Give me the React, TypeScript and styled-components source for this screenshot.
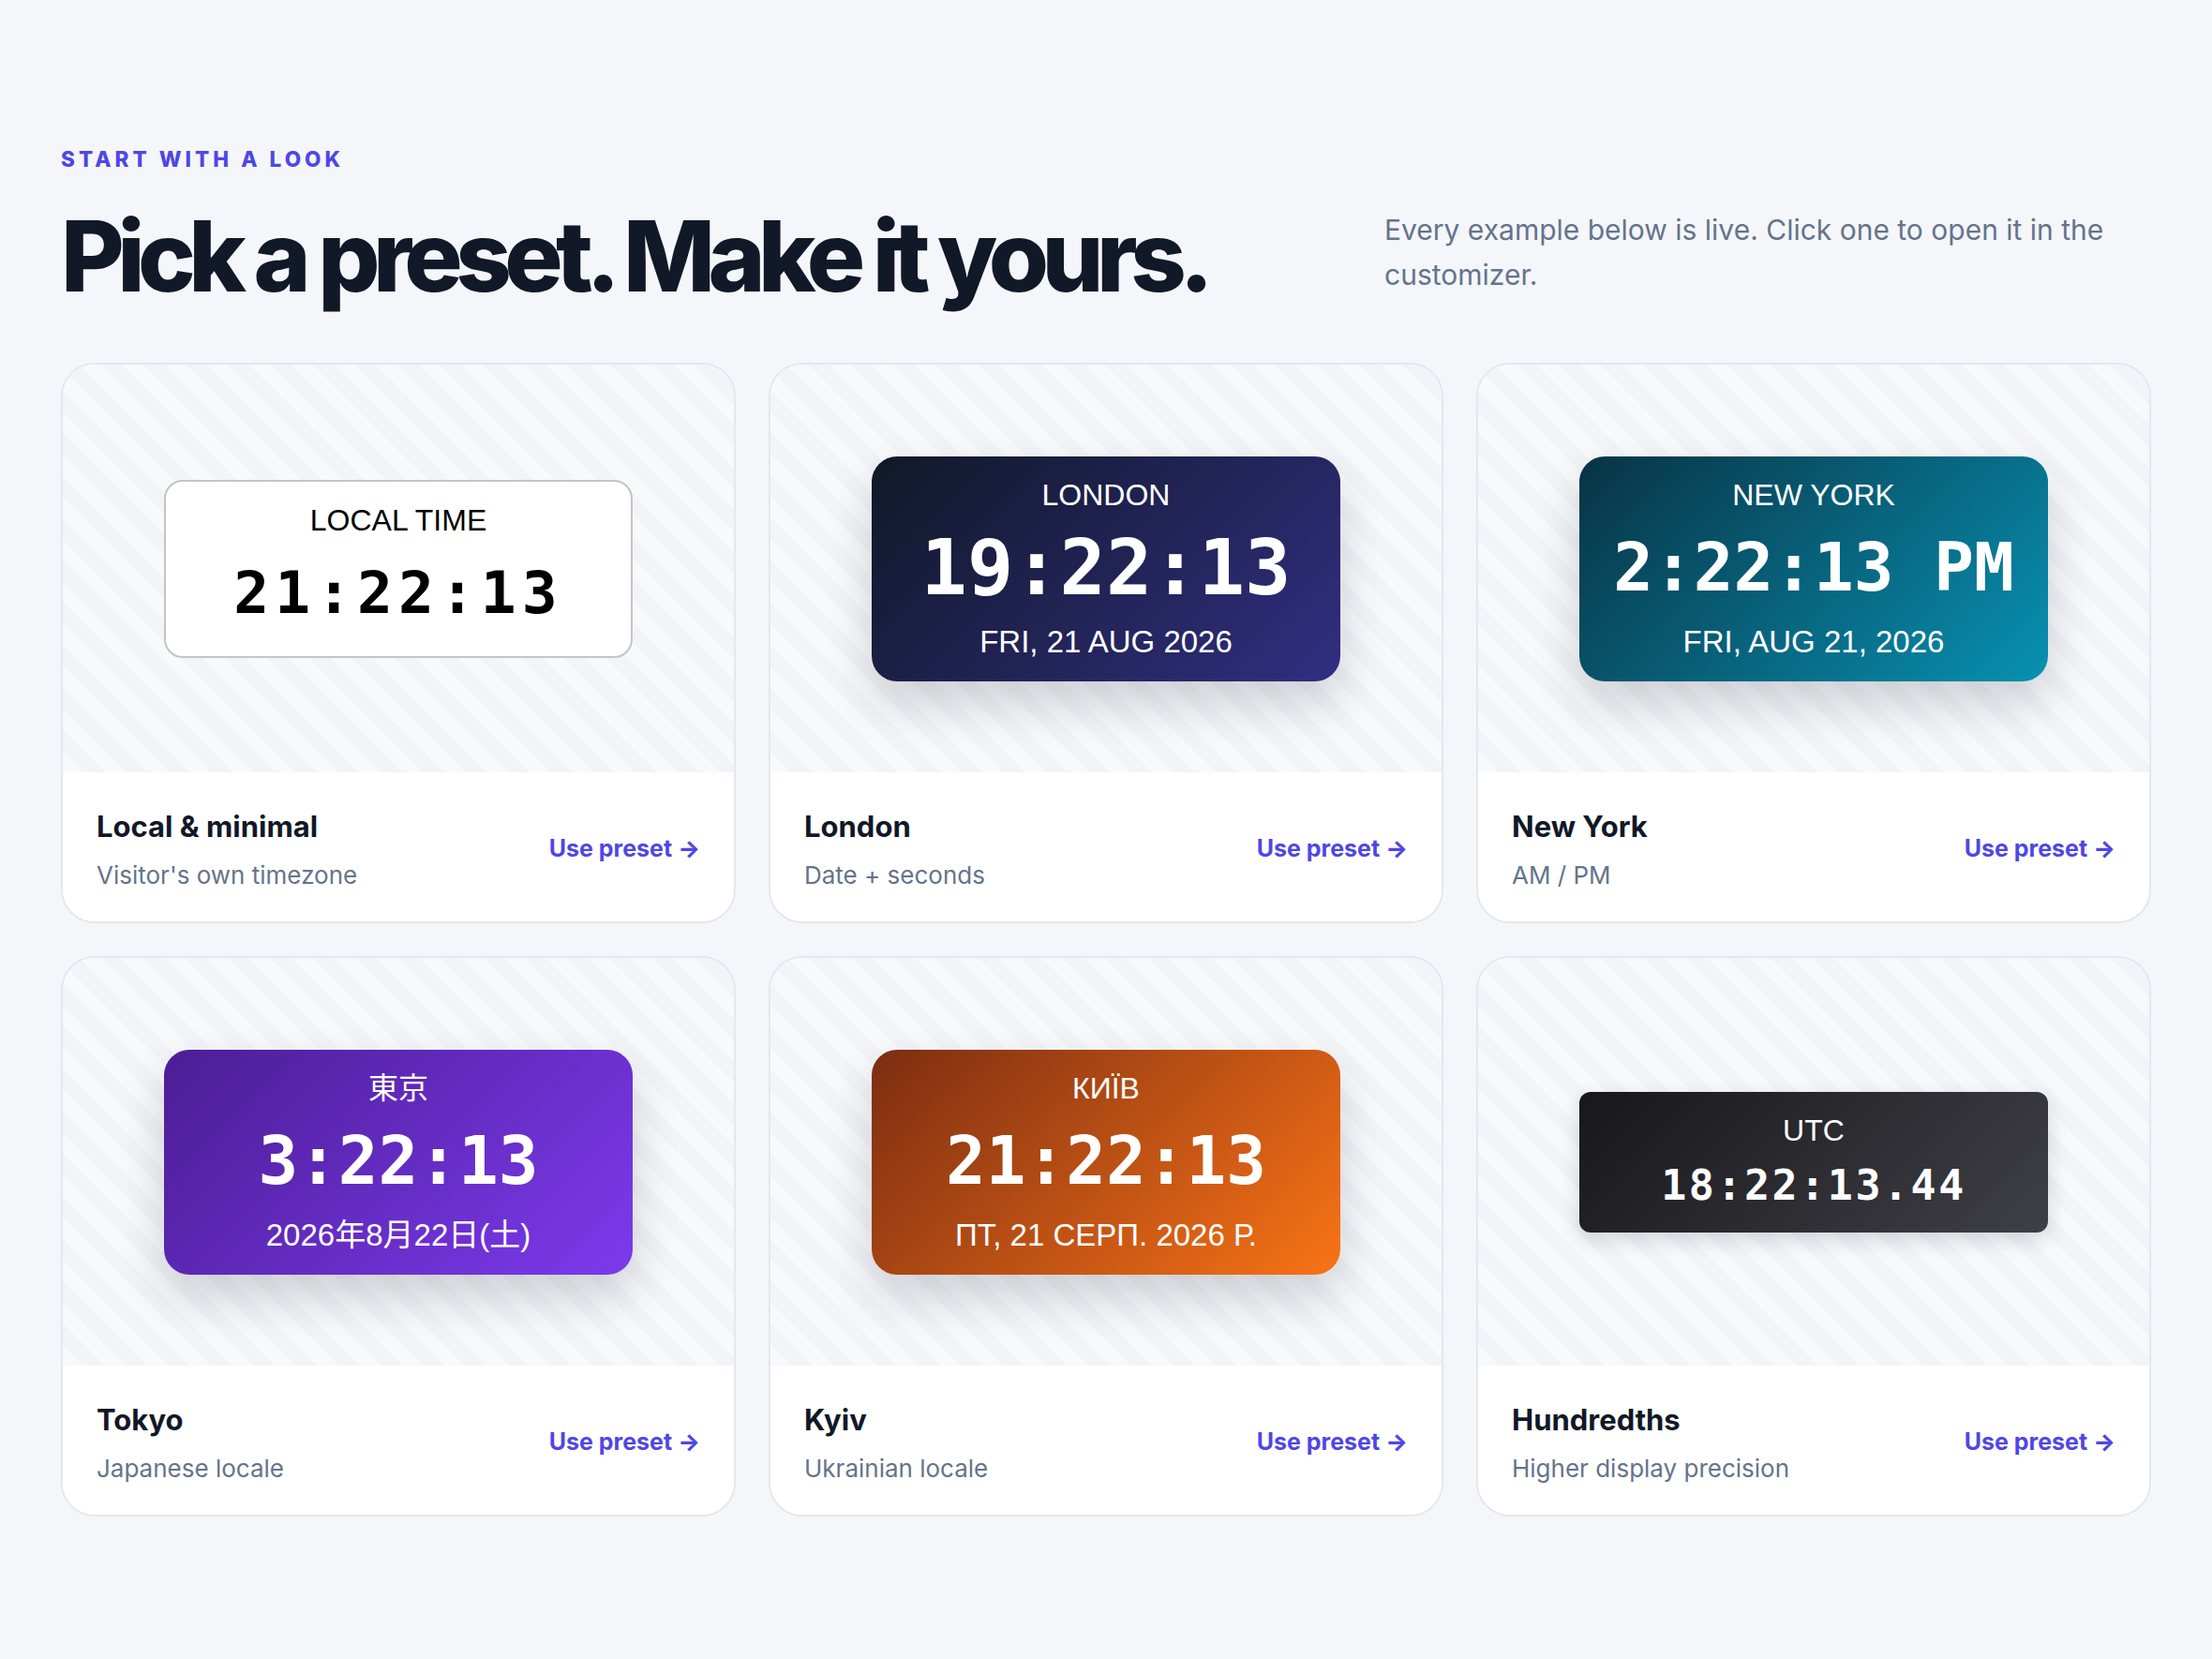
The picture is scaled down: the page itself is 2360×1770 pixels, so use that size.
import React from 'react';
import styled, { createGlobalStyle, css } from 'styled-components';

const GlobalStyle = createGlobalStyle`
  * { box-sizing: border-box; }
  html, body {
    margin: 0;
    padding: 0;
    background: #f5f6fa;
  }
  body {
    font-family: Inter, "Noto Sans", sans-serif;
    -webkit-font-smoothing: antialiased;
  }
`;

type Variant = 'light' | 'navy' | 'teal' | 'violet' | 'orange' | 'zinc';

type Preset = {
  variant: Variant;
  label: string;
  time: string;
  timeSize: number;
  date?: string;
  title: string;
  description: string;
};

const presets: Preset[] = [
  {
    variant: 'light',
    label: 'LOCAL TIME',
    time: '21:22:13',
    timeSize: 63,
    title: 'Local & minimal',
    description: "Visitor's own timezone",
  },
  {
    variant: 'navy',
    label: 'LONDON',
    time: '19:22:13',
    timeSize: 82,
    date: 'FRI, 21 AUG 2026',
    title: 'London',
    description: 'Date + seconds',
  },
  {
    variant: 'teal',
    label: 'NEW YORK',
    time: '2:22:13 PM',
    timeSize: 71,
    date: 'FRI, AUG 21, 2026',
    title: 'New York',
    description: 'AM / PM',
  },
  {
    variant: 'violet',
    label: '東京',
    time: '3:22:13',
    timeSize: 71,
    date: '2026年8月22日(土)',
    title: 'Tokyo',
    description: 'Japanese locale',
  },
  {
    variant: 'orange',
    label: 'КИЇВ',
    time: '21:22:13',
    timeSize: 71,
    date: 'ПТ, 21 СЕРП. 2026 Р.',
    title: 'Kyiv',
    description: 'Ukrainian locale',
  },
  {
    variant: 'zinc',
    label: 'UTC',
    time: '18:22:13.44',
    timeSize: 45,
    title: 'Hundredths',
    description: 'Higher display precision',
  },
];

const backgrounds: Record<Variant, string> = {
  light: '#ffffff',
  navy: 'linear-gradient(135deg, #111827 0%, #312e81 100%)',
  teal: 'linear-gradient(135deg, #083344 0%, #0891b2 100%)',
  violet: 'linear-gradient(135deg, #4c1d95 0%, #7c3aed 100%)',
  orange: 'linear-gradient(135deg, #7c2d12 0%, #f97316 100%)',
  zinc: 'linear-gradient(135deg, #18181b 0%, #3f3f46 100%)',
};

export default function App() {
  return (
    <>
      <GlobalStyle />
      <Page>
        <Header>
          <HeadingBlock>
            <Eyebrow>Start with a look</Eyebrow>
            <Heading>Pick a preset. Make it yours.</Heading>
          </HeadingBlock>
          <Lead>
            Every example below is live. Click one to open it in the
            customizer.
          </Lead>
        </Header>

        <Grid>
          {presets.map((p) => (
            <Card key={p.title}>
              <Preview>
                <Clock $variant={p.variant}>
                  <ClockLabel>{p.label}</ClockLabel>
                  <ClockTime $size={p.timeSize} $compact={p.variant === 'zinc'} $spaced={p.variant === 'light'}>
                    {p.time}
                  </ClockTime>
                  {p.date && <ClockDate>{p.date}</ClockDate>}
                </Clock>
              </Preview>
              <Footer>
                <FooterText>
                  <CardTitle>{p.title}</CardTitle>
                  <CardDescription>{p.description}</CardDescription>
                </FooterText>
                <UseButton type="button">
                  Use preset <Arrow>→</Arrow>
                </UseButton>
              </Footer>
            </Card>
          ))}
        </Grid>
      </Page>
    </>
  );
}

const Page = styled.main`
  width: 2230px;
  margin: 0 auto;
  padding: 155px 0 120px;
`;

const Header = styled.header`
  display: flex;
  justify-content: space-between;
  align-items: flex-end;
`;

const HeadingBlock = styled.div`
  display: flex;
  flex-direction: column;
  gap: 36px;
`;

const Eyebrow = styled.p`
  margin: 0;
  font-size: 22.5px;
  line-height: 30px;
  font-weight: 800;
  letter-spacing: 0.18em;
  text-transform: uppercase;
  color: #4f46e5;
`;

const Heading = styled.h1`
  margin: 0;
  font-size: 104px;
  line-height: 1;
  font-weight: 800;
  letter-spacing: -0.073em;
  color: #111827;
`;

const Lead = styled.p`
  margin: 0 0 8px;
  width: 818px;
  font-size: 30px;
  line-height: 48px;
  color: #64748b;
`;

const Grid = styled.section`
  margin-top: 62px;
  display: grid;
  grid-template-columns: repeat(3, 1fr);
  gap: 35px;
`;

const Card = styled.article`
  display: flex;
  flex-direction: column;
  background: #ffffff;
  border: 2px solid #e4e7ef;
  border-radius: 36px;
  overflow: hidden;
  cursor: pointer;
`;

const Preview = styled.div`
  height: 435px;
  display: flex;
  align-items: center;
  justify-content: center;
  background: repeating-linear-gradient(
    45deg,
    #f8f9fb 0px,
    #f8f9fb 16px,
    #f3f4f7 16px,
    #f3f4f7 32px
  );
`;

const Clock = styled.div<{ $variant: Variant }>`
  width: 500px;
  display: flex;
  flex-direction: column;
  align-items: center;
  gap: 14px;
  padding: 22px 0;
  background: ${({ $variant }) => backgrounds[$variant]};
  color: #ffffff;
  border-radius: 27px;
  box-shadow: 0 24px 50px rgba(15, 23, 42, 0.18);

  ${({ $variant }) =>
    $variant === 'light' &&
    css`
      color: #000000;
      border: 2px solid #c4c4c8;
      border-radius: 20px;
      box-shadow: none;
    `}

  ${({ $variant }) =>
    $variant === 'zinc' &&
    css`
      gap: 12px;
      border-radius: 12px;
      box-shadow: 0 8px 22px rgba(15, 23, 42, 0.16);
    `}
`;

const ClockLabel = styled.div`
  font-family: "Liberation Sans", Arial, "Noto Sans CJK JP", sans-serif;
  font-size: 32px;
  line-height: 38px;
`;

const ClockTime = styled.div<{ $size: number; $compact?: boolean; $spaced?: boolean }>`
  font-family: "DejaVu Sans Mono", "Liberation Mono", monospace;
  font-weight: 700;
  font-size: ${({ $size }) => $size}px;
  line-height: ${({ $compact }) => ($compact ? '56px' : '90px')};
  letter-spacing: ${({ $spaced, $compact }) => ($spaced ? '6px' : $compact ? '2.5px' : '0')};
  white-space: pre;
`;

const ClockDate = styled.div`
  font-family: "Liberation Sans", Arial, "Noto Sans CJK JP", sans-serif;
  font-size: 33px;
  line-height: 40px;
`;

const Footer = styled.div`
  flex: 1;
  display: flex;
  align-items: center;
  justify-content: space-between;
  padding: 38px 36px 30px;
  background: #ffffff;
`;

const FooterText = styled.div`
  display: flex;
  flex-direction: column;
  gap: 12px;
`;

const CardTitle = styled.h3`
  margin: 0;
  font-size: 31px;
  line-height: 40px;
  font-weight: 700;
  color: #111827;
`;

const CardDescription = styled.p`
  margin: 0;
  font-size: 26px;
  line-height: 39px;
  color: #64748b;
`;

const UseButton = styled.button`
  margin-top: -6px;
  border: 0;
  padding: 0;
  background: none;
  font-family: Inter, "Noto Sans", sans-serif;
  font-size: 25px;
  font-weight: 700;
  color: #4f46e5;
  cursor: pointer;
  display: flex;
  align-items: center;
  gap: 6px;
`;

const Arrow = styled.span`
  font-weight: 800;
`;
